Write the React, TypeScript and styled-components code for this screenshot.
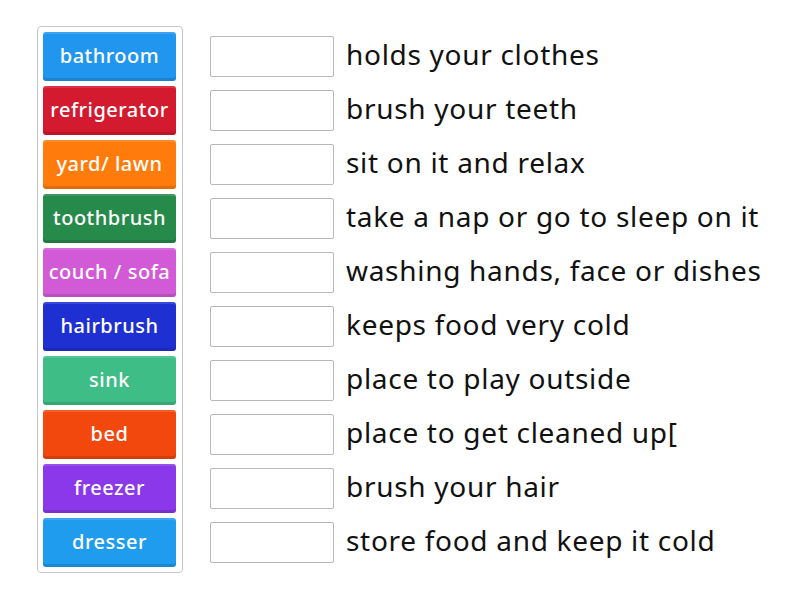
import React from "react";
import styled, { createGlobalStyle } from "styled-components";

const Global = createGlobalStyle`
  html, body { margin: 0; padding: 0; background: #fff; }
  body { font-family: "Noto Sans", "Open Sans", sans-serif; }
`;

const Page = styled.div`
  display: flex;
  align-items: flex-start;
  gap: 27px;
  padding: 26px 0 0 37px;
`;

const Panel = styled.div`
  display: flex;
  flex-direction: column;
  gap: 5px;
  padding: 5px 6px 5px 5px;
  border: 1px solid #c8c8c8;
  border-radius: 4px;
  width: 133px;
`;

const Tile = styled.div<{ $bg: string }>`
  height: 49px;
  box-sizing: border-box;
  display: flex;
  align-items: center;
  justify-content: center;
  padding-bottom: 3px;
  background: ${(p) => p.$bg};
  border-radius: 3px;
  box-shadow: inset 0 -3px 0 rgba(0, 0, 0, 0.12), inset 0 2px 0 rgba(255, 255, 255, 0.12);
  color: #fff;
  font-size: 20px;
  font-weight: 500;
  white-space: nowrap;
  letter-spacing: 0.5px;
`;

const Rows = styled.div`
  display: flex;
  flex-direction: column;
  gap: 5px;
  padding-top: 6px;
`;

const Row = styled.div`
  height: 49px;
  display: flex;
  align-items: center;
  gap: 12px;
`;

const Slot = styled.div`
  width: 124px;
  height: 41px;
  box-sizing: border-box;
  border: 1px solid #b8b8b8;
  border-radius: 2px;
  background: #fff;
`;

const Clue = styled.div`
  font-size: 28px;
  letter-spacing: 0.7px;
  color: #111;
  white-space: nowrap;
  padding-bottom: 5px;
`;

const tiles: [string, string][] = [
  ["bathroom", "#2196ee"],
  ["refrigerator", "#d41a2e"],
  ["yard/ lawn", "#ff7c0c"],
  ["toothbrush", "#258a4a"],
  ["couch / sofa", "#d25ad6"],
  ["hairbrush", "#1f30d2"],
  ["sink", "#3ebd86"],
  ["bed", "#f2470d"],
  ["freezer", "#8a38ea"],
  ["dresser", "#1f9ced"],
];

const clues = [
  "holds your clothes",
  "brush your teeth",
  "sit on it and relax",
  "take a nap or go to sleep on it",
  "washing hands, face or dishes",
  "keeps food very cold",
  "place to play outside",
  "place to get cleaned up[",
  "brush your hair",
  "store food and keep it cold",
];

export default function App() {
  return (
    <>
      <Global />
      <Page>
        <Panel>
          {tiles.map(([t, c]) => (
            <Tile key={t} $bg={c}>
              {t}
            </Tile>
          ))}
        </Panel>
        <Rows>
          {clues.map((c) => (
            <Row key={c}>
              <Slot />
              <Clue>{c}</Clue>
            </Row>
          ))}
        </Rows>
      </Page>
    </>
  );
}
